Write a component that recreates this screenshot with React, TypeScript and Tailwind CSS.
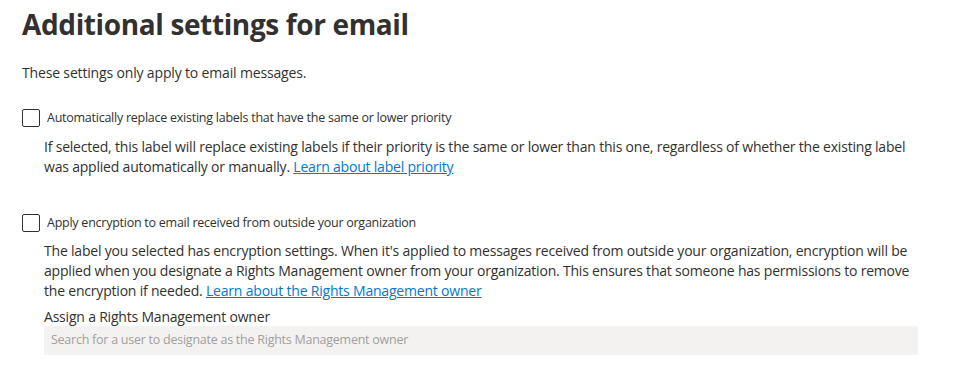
import React from "react";

const font = { fontFamily: '"Segoe UI", "Open Sans", "Noto Sans", sans-serif' };

function Checkbox() {
  return <span className="block w-[18px] h-[18px] shrink-0 rounded-[2px] border border-[#323130] bg-white" />;
}

export default function App() {
  return (
    <div className="w-[961px] h-[373px] bg-white text-[#323130] overflow-hidden" style={font}>
      <div className="pl-[22px] pr-[43px] pt-[4px]">
        <h1 className="text-[28px] leading-[40px] font-bold tracking-[-0.37px]">Additional settings for email</h1>
        <p className="mt-[19px] text-[14px] leading-[20px] tracking-[-0.16px]">These settings only apply to email messages.</p>

        <div className="mt-[25px]">
          <label className="flex items-center gap-[7px]">
            <Checkbox />
            <span className="text-[12.5px] leading-[20px] tracking-[-0.25px]">Automatically replace existing labels that have the same or lower priority</span>
          </label>
          <p className="mt-[9px] pl-[22px] text-[14px] leading-[20px] tracking-[-0.2px]">
            If selected, this label will replace existing labels if their priority is the same or lower than this one, regardless of whether the existing label was applied automatically or manually.{" "}
            <a className="text-[#0078d4] underline" href="#">Learn about label priority</a>
          </p>
        </div>

        <div className="mt-[36px]">
          <label className="flex items-center gap-[7px]">
            <Checkbox />
            <span className="text-[12.5px] leading-[20px] tracking-[-0.25px]">Apply encryption to email received from outside your organization</span>
          </label>
          <div className="pl-[22px]">
            <p className="mt-[8px] text-[14px] leading-[20px] tracking-[-0.2px]">
              The label you selected has encryption settings. When it's applied to messages received from outside your organization, encryption will be applied when you designate a Rights Management owner from your organization. This ensures that someone has permissions to remove the encryption if needed.{" "}
              <a className="text-[#0078d4] underline" href="#">Learn about the Rights Management owner</a>
            </p>
            <p className="mt-[6px] text-[14px] leading-[20px] tracking-[-0.2px]">Assign a Rights Management owner</p>
            <div className="-mt-px h-[29px] bg-[#f3f2f1] rounded-[2px] flex items-center px-[7px] text-[12.5px] tracking-[-0.25px] text-[#a19f9d]">
              Search for a user to designate as the Rights Management owner
            </div>
          </div>
        </div>
      </div>
    </div>
  );
}
